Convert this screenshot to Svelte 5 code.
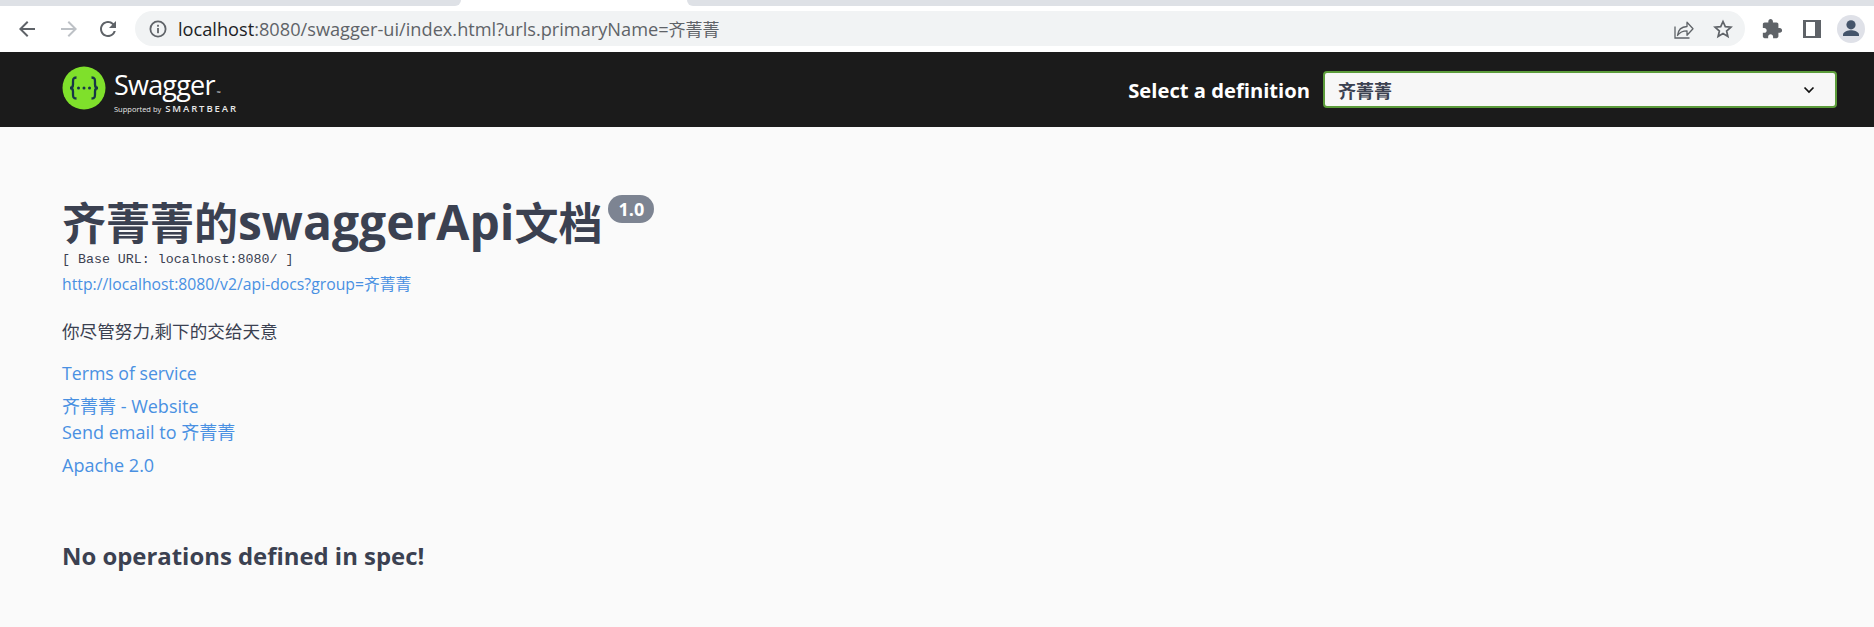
<script>
  const links = [
    { text: 'Terms of service', cls: 'terms' },
    { text: '齐菁菁 - Website', cls: 'site' },
    { text: 'Send email to 齐菁菁', cls: 'mail' },
    { text: 'Apache 2.0', cls: 'license' }
  ];
</script>

<div class="page">
  <div class="tabstrip">
    <div class="tab-left"></div>
    <div class="tab-active"></div>
    <div class="tab-right"></div>
  </div>
  <div class="toolbar">
    <div class="navs">
      <svg class="nav" viewBox="0 0 24 24"><path fill="#5f6368" d="M20 11H7.83l5.59-5.59L12 4l-8 8 8 8 1.41-1.41L7.83 13H20v-2z"/></svg>
      <svg class="nav" viewBox="0 0 24 24"><path fill="#bdc1c6" d="M4 11h12.17l-5.59-5.59L12 4l8 8-8 8-1.41-1.41L16.17 13H4v-2z"/></svg>
      <svg class="nav reload" viewBox="0 0 24 24"><path fill="#5f6368" d="M17.65 6.35A7.96 7.96 0 0 0 12 4c-4.42 0-7.99 3.58-7.99 8s3.57 8 7.99 8c3.73 0 6.84-2.55 7.73-6h-2.08A5.99 5.99 0 0 1 12 18c-3.31 0-6-2.69-6-6s2.69-6 6-6c1.66 0 3.14.69 4.22 1.78L13 11h7V4l-2.35 2.35z"/></svg>
    </div>
    <div class="omnibox">
      <svg class="info-ic" viewBox="0 0 20 20"><circle cx="10" cy="10" r="7.6" fill="none" stroke="#5f6368" stroke-width="1.8"/><rect x="9.1" y="9" width="1.8" height="5.2" fill="#5f6368"/><rect x="9.1" y="5.8" width="1.8" height="1.9" fill="#5f6368"/></svg>
      <div class="url"><span class="host">localhost</span>:8080/swagger-ui/index.html?urls.primaryName=<span class="url-cjk">齐菁菁</span></div>
      <div class="omni-actions">
        <svg class="omni-ic" viewBox="0 0 24 24" fill="none" stroke="#5f6368" stroke-width="1.3"><path d="M4 9.5V21h14.5"/><path d="M6.5 18.5c.6-5.6 4.4-8.8 9.5-9V5.2l6 6.6-6 6.4v-4.4c-3.800 0-7.200 1.300-9.500 4.700z" stroke-linejoin="round"/></svg>
        <svg class="omni-ic" viewBox="0 0 24 24" fill="none" stroke="#5f6368" stroke-width="1.700"><path stroke-linejoin="miter" d="M12 4.500l2.300 5.200 5.600.5-4.300 3.800 1.300 5.500L12 16.600l-4.900 2.900 1.300-5.500-4.300-3.800 5.600-.5z"/></svg>
      </div>
    </div>
    <div class="browser-actions">
      <svg class="ext" viewBox="0 0 24 24"><path fill="#5f6368" d="M20.5 11H19V7c0-1.100-.9-2-2-2h-4V3.500C13 2.120 11.880 1 10.500 1S8 2.120 8 3.500V5H4c-1.100 0-1.990.9-1.990 2v3.800H3.500c1.490 0 2.700 1.210 2.700 2.700s-1.210 2.700-2.700 2.700H2V20c0 1.100.9 2 2 2h3.800v-1.500c0-1.490 1.210-2.700 2.700-2.700s2.700 1.210 2.700 2.700V22H17c1.100 0 2-.9 2-2v-4h1.500c1.380 0 2.500-1.120 2.500-2.500S21.880 11 20.500 11z"/></svg>
      <div class="panel-ic"></div>
      <div class="avatar">
        <svg viewBox="0 0 28 28"><circle cx="14" cy="9.800" r="4.600" fill="#44546a"/><path fill="#44546a" d="M6 21v-1.500c0-2.900 5.300-4.300 8-4.300s8 1.400 8 4.300V21z"/></svg>
      </div>
    </div>
  </div>

  <header class="topbar">
    <div class="logo">
      <svg class="logo-mark" viewBox="0 0 44 44">
        <circle cx="22" cy="22" r="21.500" fill="#7fe02b"/>
        <path fill="none" stroke="#173647" stroke-width="2.300" d="M14.500 11.500c-3.500 0-3.500 2-3.500 4.500v2.500c0 2-1 3.500-3 3.500 2 0 3 1.500 3 3.500V28c0 2.500 0 4.500 3.500 4.500M29.500 11.500c3.500 0 3.500 2 3.500 4.500v2.500c0 2 1 3.500 3 3.500-2 0-3 1.500-3 3.500V28c0 2.500 0 4.500-3.500 4.500"/>
        <circle cx="16.500" cy="22" r="1.500" fill="#173647"/><circle cx="22" cy="22" r="1.500" fill="#173647"/><circle cx="27.500" cy="22" r="1.500" fill="#173647"/>
      </svg>
      <div class="logo-text">
        <div class="logo-name">Swagger<span class="tm">™</span></div>
        <div class="logo-sub">Supported by <span class="bear">SMARTBEAR</span></div>
      </div>
    </div>
    <div class="selector">
      <span class="sel-label">Select a definition</span>
      <div class="sel-box">
        <span>齐菁菁</span>
        <svg class="chev" viewBox="0 0 12 8"><path d="M1.500 1.500 6 6l4.500-4.500" fill="none" stroke="#111" stroke-width="1.700"/></svg>
      </div>
    </div>
  </header>

  <main class="info">
    <div class="title-row">
      <h2 class="title">齐菁菁的<span class="title-latin">swaggerApi</span>文档</h2>
      <span class="version">1.0</span>
    </div>
    <div class="base">[ Base URL: localhost:8080/ ]</div>
    <div class="spec-link">http://localhost:8080/v2/api-docs?group=齐菁菁</div>
    <p class="desc">你尽管努力,剩下的交给天意</p>
    {#each links as l}
      <div class="lnk {l.cls}">{l.text}</div>
    {/each}
    <h3 class="none">No operations defined in spec!</h3>
  </main>
</div>

<style>
  :global(body) { margin: 0; background: #fafafa; }
  .page {
    width: 1874px; height: 627px; overflow: hidden; background: #fafafa;
    font-family: "Open Sans", "Noto Sans CJK SC", sans-serif; color: #3b4151;
  }
  .tabstrip { height: 6px; display: flex; background: #fff; }
  .tab-left { width: 461px; background: #dee1e6; border-bottom-right-radius: 8px; }
  .tab-active { width: 226px; background: #fff; }
  .tab-right { flex: 1; background: #dee1e6; border-bottom-left-radius: 8px; }
  .toolbar { height: 46px; background: #fff; display: flex; align-items: flex-start; }
  .navs { display: flex; align-items: center; height: 35px; margin-top: 5px; padding-left: 15px; gap: 18px; width: 120px; box-sizing: border-box; }
  .nav { width: 24px; height: 24px; flex: none; }
  .reload { margin-left: -3px; }
  .omnibox {
    margin: 5px 0 0 15px; width: 1610px; height: 35px; border-radius: 18px; background: #f1f3f4;
    display: flex; align-items: center; padding-left: 13px; box-sizing: border-box;
  }
  .info-ic { width: 20px; height: 20px; flex: none; }
  .url { margin-left: 10px; font-size: 18.200px; color: #5f6368; white-space: nowrap; flex: 1; }
  .url-cjk { font-size: 17px; }
  .host { color: #202124; }
  .omni-actions { display: flex; gap: 16px; align-items: center; padding-right: 10px; }
  .omni-ic { width: 24px; height: 24px; }
  .browser-actions { display: flex; align-items: center; height: 35px; margin-top: 5px; padding-left: 16px; }
  .ext { width: 22px; height: 22px; }
  .panel-ic { width: 18px; height: 18px; margin-left: 20px; border: solid #5f6368; border-width: 2px 6px 2px 3px; box-sizing: border-box; }
  .avatar { width: 28px; height: 28px; border-radius: 50%; background: #dfe1e8; margin-left: 16px; }
  .avatar svg { display: block; width: 28px; height: 28px; }

  .topbar {
    height: 75px; background: #1b1b1b; display: flex; align-items: center; justify-content: space-between;
    padding: 0 37px 0 62px; box-sizing: border-box;
  }
  .logo { display: flex; align-items: flex-start; align-self: flex-start; padding-top: 13px; }
  .logo-mark { width: 44px; height: 44px; flex: none; margin-top: 1px; }
  .logo-text { margin-left: 8px; color: #fff; }
  .logo-name { font-size: 27px; line-height: 36px; margin-top: 2px; font-weight: 400; letter-spacing: -0.8px; }
  .tm { font-size: 5px; line-height: 0; margin-left: 2px; }
  .logo-sub { font-size: 7.500px; line-height: 10px; margin-top: 1px; color: #e8e8e8; white-space: nowrap; }
  .bear { font-size: 9.500px; letter-spacing: 1.900px; font-weight: 600; margin-left: 2px; }
  .selector { display: flex; align-items: center; }
  .sel-label { font-size: 20.200px; font-weight: 700; color: #fff; margin-right: 13px; }
  .sel-box {
    width: 514px; height: 37px; box-sizing: border-box; border: 2px solid #5c9c3b; border-radius: 4px;
    background: #f7f7f7; display: flex; align-items: center; justify-content: space-between;
    padding: 0 20px 0 13px; font-size: 18px; font-weight: 700; color: #3b4151;
  }
  .chev { width: 12px; height: 8px; }

  .info { padding: 68px 0 0 62px; }
  .title-row { display: flex; align-items: flex-start; }
  .title { margin: 0; font-size: 44px; line-height: 54px; font-weight: 700; color: #3b4151; white-space: nowrap; }
  .title-latin { font-size: 48px; line-height: 54px; }
  .version {
    margin: 0 0 0 6px; background: #7d8492; color: #fff; border-radius: 14px; font-size: 18px; font-weight: 700;
    line-height: 28px; height: 28px; padding: 0 10px;
  }
  .base { font-family: "Liberation Mono", monospace; font-size: 13.300px; line-height: 18px; margin-top: 1px; color: #3b4151; }
  .spec-link { font-size: 15.750px; line-height: 20px; margin-top: 5px; color: #4990e2; }
  .desc { font-size: 17.600px; line-height: 24px; margin: 25px 0 0; color: #3b4151; }
  .lnk { font-size: 18px; line-height: 26px; color: #4990e2; }
  .terms { margin-top: 17px; font-size: 17.700px; }
  .site { margin-top: 7px; }
  .mail { margin-top: 0; }
  .license { margin-top: 7px; }
  .none { margin: 62px 0 0; font-size: 23.900px; line-height: 32px; font-weight: 700; color: #3b4151; }
</style>
